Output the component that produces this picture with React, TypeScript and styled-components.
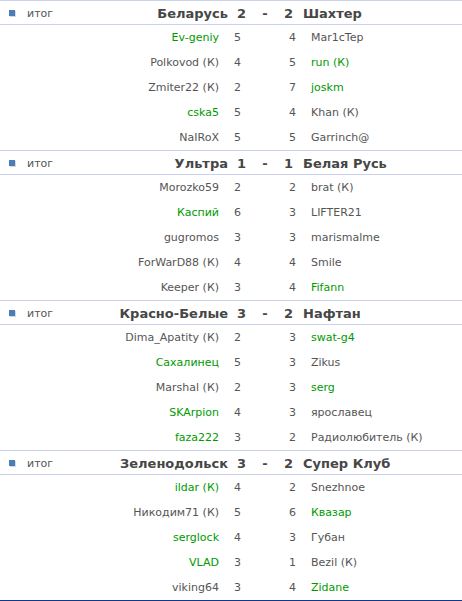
import React from "react";
import styled, { createGlobalStyle } from "styled-components";

const Global = createGlobalStyle`
  html, body { margin: 0; padding: 0; background: #ffffff; }
  body { font-family: "DejaVu Sans", Verdana, sans-serif; }
`;

type Player = { name: string; win?: boolean };
type Row = { l: Player; ls: number; rs: number; r: Player };
type Match = { home: string; away: string; hs: number; as: number; rows: Row[] };

const p = (name: string, win = false): Player => ({ name, win });

const matches: Match[] = [
  {
    home: "Беларусь", away: "Шахтер", hs: 2, as: 2,
    rows: [
      { l: p("Ev-geniy", true), ls: 5, rs: 4, r: p("Mar1cTep") },
      { l: p("Polkovod (К)"), ls: 4, rs: 5, r: p("run (К)", true) },
      { l: p("Zmiter22 (К)"), ls: 2, rs: 7, r: p("joskm", true) },
      { l: p("cska5", true), ls: 5, rs: 4, r: p("Khan (К)") },
      { l: p("NaIRoX"), ls: 5, rs: 5, r: p("Garrinch@") },
    ],
  },
  {
    home: "Ультра", away: "Белая Русь", hs: 1, as: 1,
    rows: [
      { l: p("Morozko59"), ls: 2, rs: 2, r: p("brat (К)") },
      { l: p("Каспий", true), ls: 6, rs: 3, r: p("LIFTER21") },
      { l: p("gugromos"), ls: 3, rs: 3, r: p("marismalme") },
      { l: p("ForWarD88 (К)"), ls: 4, rs: 4, r: p("Smile") },
      { l: p("Keeper (К)"), ls: 3, rs: 4, r: p("Fifann", true) },
    ],
  },
  {
    home: "Красно-Белые", away: "Нафтан", hs: 3, as: 2,
    rows: [
      { l: p("Dima_Apatity (К)"), ls: 2, rs: 3, r: p("swat-g4", true) },
      { l: p("Сахалинец", true), ls: 5, rs: 3, r: p("Zikus") },
      { l: p("Marshal (К)"), ls: 2, rs: 3, r: p("serg", true) },
      { l: p("SKArpion", true), ls: 4, rs: 3, r: p("ярославец") },
      { l: p("faza222", true), ls: 3, rs: 2, r: p("Радиолюбитель (К)") },
    ],
  },
  {
    home: "Зеленодольск", away: "Супер Клуб", hs: 3, as: 2,
    rows: [
      { l: p("ildar (К)", true), ls: 4, rs: 2, r: p("Snezhnoe") },
      { l: p("Никодим71 (К)"), ls: 5, rs: 6, r: p("Квазар", true) },
      { l: p("serglock", true), ls: 4, rs: 3, r: p("Губан") },
      { l: p("VLAD", true), ls: 3, rs: 1, r: p("Bezil (К)") },
      { l: p("viking64"), ls: 3, rs: 4, r: p("Zidane", true) },
    ],
  },
];

const Page = styled.div`
  width: 462px;
  border-bottom: 1px solid #0b3a8f;
`;

const Block = styled.section`
  display: flex;
  flex-direction: column;
`;

const gridCols = `228px 30px 14px 24px 1fr`;

const HeaderRow = styled.div`
  display: grid;
  grid-template-columns: ${gridCols};
  align-items: center;
  height: 22px;
  padding-top: 1px;
  border-top: 1px solid #c9d1ec;
  border-bottom: 1px solid #c9d1ec;
  font-size: 13px;
  font-weight: bold;
  color: #464646;
`;

const HomeCell = styled.div`
  display: flex;
  align-items: center;
  min-width: 0;
`;

const Bullet = styled.span`
  width: 6px;
  height: 6px;
  margin-left: 9px;
  margin-bottom: 1px;
  background: #4a7eb6;
  box-shadow: 1px 1px 0 #d9d9d9;
  flex: none;
`;

const Total = styled.span`
  margin-left: 12px;
  font-size: 11px;
  font-weight: normal;
  color: #555555;
`;

const TeamName = styled.span<{ $side: "left" | "right" }>`
  white-space: nowrap;
  ${(p) => (p.$side === "left" ? "margin-left: auto;" : "padding-left: 7px;")}
`;

const HeadScore = styled.span<{ $pad: number }>`
  padding-left: ${(p) => p.$pad}px;
`;

const Dash = styled.span`
  text-align: center;
  font-weight: bold;
`;

const DataRow = styled.div`
  display: grid;
  grid-template-columns: ${gridCols};
  align-items: center;
  height: 25px;
  font-size: 11px;
  color: #555555;
`;

const Name = styled.span<{ $win?: boolean; $side: "left" | "right" }>`
  white-space: nowrap;
  color: ${(p) => (p.$win ? "#009a00" : "#555555")};
  ${(p) =>
    p.$side === "left"
      ? "text-align: right; padding-right: 9px;"
      : "padding-left: 15px;"}
`;

const LeftScore = styled.span`
  padding-left: 6px;
`;

const RightScore = styled.span`
  grid-column: 4;
  text-align: right;
`;

export default function App() {
  return (
    <>
      <Global />
      <Page>
        {matches.map((m, i) => (
          <Block key={i}>
            <HeaderRow>
              <HomeCell>
                <Bullet />
                <Total>итог</Total>
                <TeamName $side="left">{m.home}</TeamName>
              </HomeCell>
              <HeadScore $pad={9}>{m.hs}</HeadScore>
              <Dash>-</Dash>
              <HeadScore $pad={12}>{m.as}</HeadScore>
              <TeamName $side="right">{m.away}</TeamName>
            </HeaderRow>
            {m.rows.map((r, j) => (
              <DataRow key={j}>
                <Name $side="left" $win={r.l.win}>{r.l.name}</Name>
                <LeftScore>{r.ls}</LeftScore>
                <RightScore>{r.rs}</RightScore>
                <Name $side="right" $win={r.r.win}>{r.r.name}</Name>
              </DataRow>
            ))}
          </Block>
        ))}
      </Page>
    </>
  );
}
